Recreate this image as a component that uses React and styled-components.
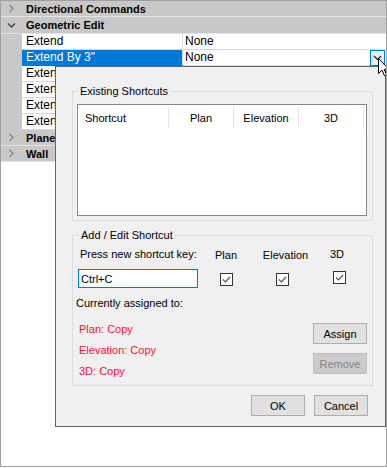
import { createGlobalStyle, styled } from "styled-components";

const GlobalStyle = createGlobalStyle`
  html, body {
    margin: 0;
    padding: 0;
    background: #ffffff;
  }
  body {
    font-family: "Liberation Sans", Arial, sans-serif;
    font-size: 11px;
    color: #000;
  }
`;

const categories = [
  { name: "Directional Commands", open: false },
  {
    name: "Geometric Edit",
    open: true,
    items: [
      { name: "Extend", value: "None" },
      { name: "Extend By 3\"", value: "None", selected: true },
      { name: "Extend By 6\"", value: "None" },
      { name: "Extend By 1'", value: "None" },
      { name: "Extend By 2'", value: "None" },
      { name: "Extend By 4'", value: "None" },
    ],
  },
  { name: "Plane", open: false },
  { name: "Wall", open: false },
];

function Chevron({ open }) {
  return open ? (
    <svg width="9" height="9" viewBox="0 0 9 9">
      <path d="M1 2.5 L4.5 6 L8 2.5" fill="none" stroke="#404040" strokeWidth="1.4" />
    </svg>
  ) : (
    <svg width="9" height="9" viewBox="0 0 9 9">
      <path d="M2.5 1 L6 4.5 L2.5 8" fill="none" stroke="#8a8a8a" strokeWidth="1.4" />
    </svg>
  );
}

function Check() {
  return (
    <CheckBox>
      <svg width="11" height="11" viewBox="0 0 11 11">
        <path d="M2 5.5 L4.5 8 L9 3" fill="none" stroke="#555" strokeWidth="1.2" />
      </svg>
    </CheckBox>
  );
}

function App() {
  return (
    <>
      <GlobalStyle />
      <Frame>
        <Tree>
          {categories.map((c) => (
            <div key={c.name}>
              <CategoryRow $open={c.open}>
                <Gutter>
                  <Chevron open={c.open} />
                </Gutter>
                <CategoryName>{c.name}</CategoryName>
              </CategoryRow>
              {c.open &&
                c.items.map((it) => (
                  <ItemRow key={it.name}>
                    <Gutter />
                    <NameCell $selected={it.selected}>{it.name}</NameCell>
                    <ValueCell>
                      {it.value}
                      {it.selected && (
                        <DropButton>
                          <svg width="9" height="6" viewBox="0 0 9 6">
                            <path d="M1 1 L4.5 4.5 L8 1" fill="none" stroke="#222" strokeWidth="1.2" />
                          </svg>
                        </DropButton>
                      )}
                    </ValueCell>
                  </ItemRow>
                ))}
            </div>
          ))}
        </Tree>

        <Dialog>
          <Group>
            <Legend>Existing Shortcuts</Legend>
            <ListBox>
              <ListHeader>
                <HeaderCell $w={91} $left>Shortcut</HeaderCell>
                <HeaderCell $w={65}>Plan</HeaderCell>
                <HeaderCell $w={65}>Elevation</HeaderCell>
                <HeaderCell $w={65}>3D</HeaderCell>
              </ListHeader>
            </ListBox>
          </Group>

          <EditGroup>
            <Legend>Add / Edit Shortcut</Legend>
            <KeyGrid>
              <KeyLabel>Press new shortcut key:</KeyLabel>
              <ColLabel>Plan</ColLabel>
              <ColLabel $shift={3}>Elevation</ColLabel>
              <ColLabel $up $shift={-2}>3D</ColLabel>
              <KeyInput readOnly value="Ctrl+C" />
              <CheckCell><Check /></CheckCell>
              <CheckCell><Check /></CheckCell>
              <CheckCell $up><Check /></CheckCell>
            </KeyGrid>
            <AssignedTitle>Currently assigned to:</AssignedTitle>
            <AssignedRow>
              <AssignedList>
                <Assigned>Plan: Copy</Assigned>
                <Assigned>Elevation: Copy</Assigned>
                <Assigned>3D: Copy</Assigned>
              </AssignedList>
              <ButtonColumn>
                <Button>Assign</Button>
                <Button disabled>Remove</Button>
              </ButtonColumn>
            </AssignedRow>
          </EditGroup>

          <Footer>
            <Button>OK</Button>
            <Button>Cancel</Button>
          </Footer>
        </Dialog>

        <Cursor>
          <svg width="12" height="19" viewBox="0 0 12 19">
            <path
              d="M0.5 0.5 L0.5 15.5 L4 12 L6.5 17.8 L8.6 16.9 L6.2 11.3 L11 11.3 Z"
              fill="#fff"
              stroke="#000"
              strokeWidth="1"
              strokeLinejoin="miter"
            />
          </svg>
        </Cursor>
      </Frame>
    </>
  );
}

export default App;

const Frame = styled.div`
  position: relative;
  box-sizing: border-box;
  width: 387px;
  height: 467px;
  border: 1px solid #a0a0a0;
  background: #ffffff;
  overflow: hidden;
`;

const Tree = styled.div`
  display: flex;
  flex-direction: column;
`;

const CategoryRow = styled.div`
  display: flex;
  align-items: center;
  box-sizing: border-box;
  height: ${(p) => (p.$open ? "17px" : "16px")};
  background: #c8c8c8;
  border-bottom: 1px solid #e4e4e4;
`;

const Gutter = styled.div`
  width: 21px;
  height: 100%;
  flex: none;
  display: flex;
  align-items: center;
  justify-content: center;
  background: #c8c8c8;
`;

const CategoryName = styled.div`
  padding-left: 4px;
  font-weight: bold;
  font-size: 11px;
  color: #000;
`;

const ItemRow = styled.div`
  display: flex;
  box-sizing: border-box;
  height: 16px;
`;

const NameCell = styled.div`
  box-sizing: border-box;
  width: 161px;
  height: 16px;
  padding-left: 4px;
  line-height: 15px;
  font-size: 12px;
  white-space: nowrap;
  overflow: hidden;
  background: ${(p) => (p.$selected ? "#0078d7" : "#ffffff")};
  color: ${(p) => (p.$selected ? "#ffffff" : "#000000")};
  border-bottom: 1px solid ${(p) => (p.$selected ? "#0078d7" : "#d8d8d8")};
  border-right: 1px solid #d8d8d8;
`;

const ValueCell = styled.div`
  position: relative;
  flex: 1;
  box-sizing: border-box;
  height: 16px;
  padding-left: 2px;
  line-height: 15px;
  font-size: 12px;
  border-bottom: 1px solid #d8d8d8;
`;

const DropButton = styled.div`
  position: absolute;
  right: 1px;
  top: 0;
  box-sizing: border-box;
  width: 15px;
  height: 16px;
  border: 1px solid #0078d7;
  background: #e5f1fb;
  display: flex;
  align-items: center;
  justify-content: center;
`;

const Dialog = styled.div`
  position: absolute;
  left: 54px;
  top: 65px;
  box-sizing: border-box;
  width: 331px;
  height: 361px;
  background: #f0f0f0;
  border: 1px solid #646464;
  padding: 17px 12px 0 16px;
  display: flex;
  flex-direction: column;
`;

const Group = styled.fieldset`
  margin: 0;
  padding: 0 5px 4px 4px;
  border: 1px solid #dcdcdc;
  min-width: 0;
`;

const EditGroup = styled(Group)`
  margin-top: 7px;
  padding: 0 5px 0 5px;
  height: 158px;
  box-sizing: border-box;
`;

const Legend = styled.legend`
  padding: 0 2px;
  margin-left: 1px;
  font-size: 11px;
  line-height: 14px;
  color: #000;
`;

const ListBox = styled.div`
  margin-top: 6px;
  box-sizing: border-box;
  height: 112px;
  border: 1px solid #828790;
  background: #ffffff;
`;

const ListHeader = styled.div`
  display: flex;
  height: 22px;
  margin-top: 2px;
`;

const HeaderCell = styled.div`
  box-sizing: border-box;
  width: ${(p) => p.$w}px;
  border-right: 1px solid #e5e5e5;
  display: flex;
  align-items: center;
  justify-content: ${(p) => (p.$left ? "flex-start" : "center")};
  padding-left: ${(p) => (p.$left ? "7px" : "0")};
  font-size: 11px;
`;

const KeyGrid = styled.div`
  display: grid;
  grid-template-columns: 120px 56px 57px 56px;
  grid-template-rows: 22px 20px;
  margin-top: 5px;
`;

const KeyLabel = styled.div`
  padding-left: 2px;
  font-size: 11px;
  line-height: 14px;
  white-space: nowrap;
`;

const ColLabel = styled.div`
  text-align: center;
  font-size: 11px;
  line-height: 14px;
  margin-top: ${(p) => (p.$up ? "0" : "1px")};
  transform: translateX(${(p) => p.$shift || 0}px);
`;

const KeyInput = styled.input`
  box-sizing: border-box;
  width: 120px;
  height: 19px;
  margin: 0;
  border: 1px solid #0078d7;
  padding: 0 2px;
  font-family: "Liberation Sans", Arial, sans-serif;
  font-size: 11px;
  background: #ffffff;
  outline: none;
`;

const CheckCell = styled.div`
  display: flex;
  justify-content: center;
  padding-top: ${(p) => (p.$up ? "2px" : "4px")};
`;

const CheckBox = styled.div`
  box-sizing: border-box;
  width: 13px;
  height: 13px;
  border: 1px solid #333333;
  background: #ffffff;
  display: flex;
  align-items: center;
  justify-content: center;
`;

const AssignedTitle = styled.div`
  margin-top: 7px;
  margin-left: -2px;
  font-size: 11px;
  line-height: 14px;
`;

const AssignedRow = styled.div`
  display: flex;
  justify-content: space-between;
  margin-top: 12px;
`;

const AssignedList = styled.div`
  display: flex;
  flex-direction: column;
  gap: 7px;
  padding-left: 1px;
`;

const Assigned = styled.div`
  color: #ff1033;
  font-size: 11px;
  line-height: 14px;
`;

const ButtonColumn = styled.div`
  display: flex;
  flex-direction: column;
  gap: 9px;
  padding-top: 1px;
`;

const Button = styled.button`
  box-sizing: border-box;
  width: 54px;
  height: 21px;
  margin: 0;
  padding: 0;
  border: 1px solid ${(p) => (p.disabled ? "#bfbfbf" : "#adadad")};
  background: ${(p) => (p.disabled ? "#cccccc" : "#e1e1e1")};
  color: ${(p) => (p.disabled ? "#838383" : "#000000")};
  font-family: "Liberation Sans", Arial, sans-serif;
  font-size: 11px;
`;

const Footer = styled.div`
  display: flex;
  justify-content: flex-end;
  gap: 9px;
  margin-top: 9px;
  padding-right: 5px;
`;

const Cursor = styled.div`
  position: absolute;
  left: 377px;
  top: 57px;
  line-height: 0;
`;
